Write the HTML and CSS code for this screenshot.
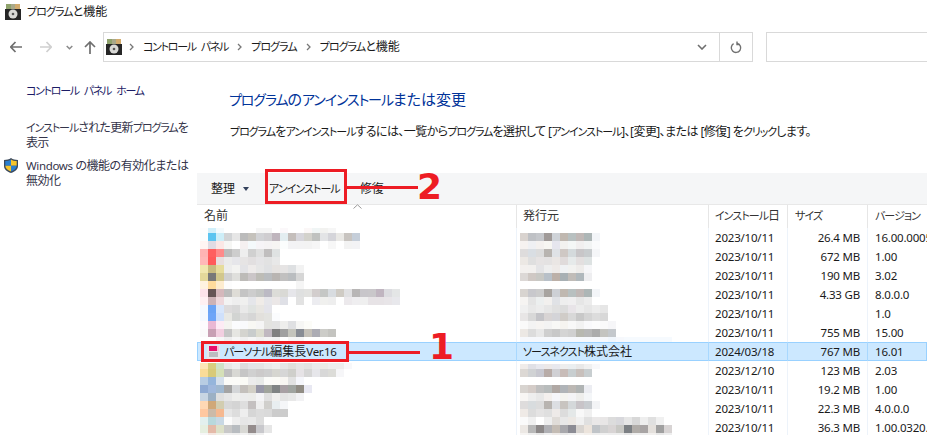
FILE: index.html
```html
<!DOCTYPE html>
<html lang="ja">
<head>
<meta charset="utf-8">
<title>プログラムと機能</title>
<link rel="stylesheet" href="styles.css">
</head>
<body>
<svg class="defs" width="0" height="0" aria-hidden="true">
  <symbol id="cp" viewBox="0 0 16 16">
    <rect x="0" y="5" width="16" height="11" fill="#262626"/>
    <path d="M1 0h14v5H1z" fill="#a9a98a"/>
    <path d="M1 0h5v5H1z" fill="#8fa26c"/>
    <path d="M10 0h5v5h-5z" fill="#d2ab6e"/>
    <circle cx="8" cy="10" r="4.500" fill="#d9d9d6"/>
    <circle cx="8" cy="10" r="1.300" fill="#555"/>
  </symbol>
</svg>
<header class="titlebar">
  <svg class="icon16"><use href="#cp"/></svg>
  <span><span class="ka">プログラム</span>と機能</span>
</header>
<nav class="navbar">
  <svg class="nav-icon" width="12" height="12" viewBox="0 0 12 12"><path d="M5.500 1 .8 6 5.500 11M1 6H12" fill="none" stroke="#6f6f6f" stroke-width="1.700"/></svg>
  <svg class="nav-icon fwd" width="12" height="12" viewBox="0 0 12 12"><path d="M6.500 1 11.200 6 6.500 11M11 6H0" fill="none" stroke="#d0d0d0" stroke-width="1.700"/></svg>
  <svg class="nav-icon down" width="7" height="5" viewBox="0 0 7 5"><path d="M.7 1 3.500 3.800 6.300 1" fill="none" stroke="#8a8a8a" stroke-width="1.500"/></svg>
  <svg class="nav-icon up" width="12" height="13" viewBox="0 0 12 13"><path d="M1 6 6 1 11 6M6 1.500V13" fill="none" stroke="#6f6f6f" stroke-width="1.700"/></svg>
  <div class="address">
    <svg class="icon16 addr-icon"><use href="#cp"/></svg>
    <svg class="crumb-sep first" width="5" height="8" viewBox="0 0 5 8"><path d="M1 1 4 4 1 7" fill="none" stroke="#777" stroke-width="1.300"/></svg>
    <span class="ka sp">コントロール パネル</span>
    <svg class="crumb-sep" width="5" height="8" viewBox="0 0 5 8"><path d="M1 1 4 4 1 7" fill="none" stroke="#777" stroke-width="1.300"/></svg>
    <span class="ka">プログラム</span>
    <svg class="crumb-sep" width="5" height="8" viewBox="0 0 5 8"><path d="M1 1 4 4 1 7" fill="none" stroke="#777" stroke-width="1.300"/></svg>
    <span><span class="ka">プログラム</span>と機能</span>
    <div class="addr-end">
      <svg width="10" height="6" viewBox="0 0 10 6"><path d="M1 1 5 5 9 1" fill="none" stroke="#6f6f6f" stroke-width="1.600"/></svg>
    </div>
    <div class="refresh">
      <svg width="12" height="13" viewBox="0 0 12 13"><path d="M7.500 2.300A4.700 4.700 0 1 1 3.600 2.700M7 .5V3.500H10" fill="none" stroke="#707070" stroke-width="1.400"/></svg>
    </div>
  </div>
  <div class="search"></div>
</nav>
<div class="content">
  <aside class="sidebar">
    <a class="home"><span class="ka sp">コントロール パネル ホーム</span></a>
    <a class="updates"><span class="ka">インストール</span>された更新<span class="ka">プログラム</span>を<br>表示</a>
    <a class="features">
      <svg class="shield" width="14" height="15" viewBox="0 0 14 15">
        <path d="M7 0C5 1.400 2.800 1.900 0 2V8c0 3.300 2.800 5.500 7 7 4.200-1.500 7-3.700 7-7V2C11.200 1.900 9 1.400 7 0z" fill="#3c4a5c"/>
        <path d="M7 1.400C5.500 2.400 3.500 3 1.300 3.100V7.700H7z" fill="#2a7fd0"/>
        <path d="M7 1.400c1.500 1 3.500 1.600 5.700 1.700V7.700H7z" fill="#f7c52b"/>
        <path d="M1.300 7.700H7V13.500C3.800 12.300 1.500 10.500 1.300 7.700z" fill="#f7c52b"/>
        <path d="M12.700 7.700H7V13.500c3.200-1.200 5.500-3 5.700-5.800z" fill="#2a7fd0"/>
      </svg>
      <span><span class="lat">Windows</span> の機能の有効化または<br>無効化</span>
    </a>
  </aside>
  <main class="main">
    <h1 class="heading"><span class="ka">プログラム</span>の<span class="ka">アンインストール</span>または変更</h1>
    <p class="desc"><span class="ka">プログラム</span>を<span class="ka">アンインストール</span>するには、一覧から<span class="ka">プログラム</span>を選択して [<span class="ka">アンインストール</span>]、[変更]、または [修復] を<span class="ka">クリック</span>します。</p>
    <div class="toolbar">
      <span class="tool organize">整理<i class="tri"></i></span>
      <span class="tool uninstall ka">アンインストール</span>
      <span class="tool repair">修復</span>
      <b class="callout-box box-two"></b>
      <b class="callout-line line-two"></b>
      <b class="callout-num num-two">2</b>
    </div>
    <section class="list">
      <div class="row head">
        <div class="c-name">名前<svg class="sort" width="9" height="5" viewBox="0 0 9 5"><path d="M.5 4.500 4.500 .8 8.500 4.500" fill="none" stroke="#9a9a9a"/></svg></div>
        <div class="c-pub">発行元</div>
        <div class="c-date"><span class="ka">インストール</span>日</div>
        <div class="c-size left"><span class="ka">サイズ</span></div>
        <div class="c-ver"><span class="ka">バージョン</span></div>
      </div>
      <div class="row"><div class="c-name"></div><div class="c-pub"></div><div class="c-date">2023/10/11</div><div class="c-size">26.4 MB</div><div class="c-ver">16.00.0005</div></div>
      <div class="row"><div class="c-name"></div><div class="c-pub"></div><div class="c-date">2023/10/11</div><div class="c-size">672 MB</div><div class="c-ver">1.00</div></div>
      <div class="row"><div class="c-name"></div><div class="c-pub"></div><div class="c-date">2023/10/11</div><div class="c-size">190 MB</div><div class="c-ver">3.02</div></div>
      <div class="row"><div class="c-name"></div><div class="c-pub"></div><div class="c-date">2023/10/11</div><div class="c-size">4.33 GB</div><div class="c-ver">8.0.0.0</div></div>
      <div class="row"><div class="c-name"></div><div class="c-pub"></div><div class="c-date">2023/10/11</div><div class="c-size"></div><div class="c-ver">1.0</div></div>
      <div class="row"><div class="c-name"></div><div class="c-pub"></div><div class="c-date">2023/10/11</div><div class="c-size">755 MB</div><div class="c-ver">15.00</div></div>
      <div class="row selected">
        <div class="c-name">
          <svg class="app-icon" width="13" height="14" viewBox="0 0 13 14"><rect width="13" height="14" fill="#e8e6ea"/><rect x="2" y="1" width="8" height="5" fill="#e8106c"/><rect x="10" y="1" width="2" height="5" fill="#f8c0d8"/><rect x="2" y="7" width="9" height="5" fill="#bcbcc0"/></svg>
          <span><span class="ka">パーソナル</span>編集長<span class="lat">Ver.16</span></span>
        </div>
        <div class="c-pub"><span class="ka">ソースネクスト</span>株式会社</div><div class="c-date">2024/03/18</div><div class="c-size">767 MB</div><div class="c-ver">16.01</div>
      </div>
      <div class="row"><div class="c-name"></div><div class="c-pub"></div><div class="c-date">2023/12/10</div><div class="c-size">123 MB</div><div class="c-ver">2.03</div></div>
      <div class="row"><div class="c-name"></div><div class="c-pub"></div><div class="c-date">2023/10/11</div><div class="c-size">19.2 MB</div><div class="c-ver">1.00</div></div>
      <div class="row"><div class="c-name"></div><div class="c-pub"></div><div class="c-date">2023/10/11</div><div class="c-size">22.3 MB</div><div class="c-ver">4.0.0.0</div></div>
      <div class="row"><div class="c-name"></div><div class="c-pub"></div><div class="c-date">2023/10/11</div><div class="c-size">36.3 MB</div><div class="c-ver">1.00.0320.0</div></div>
      <svg id="mosaic" class="mosaic" viewBox="197 204 730 231" width="730" height="231" aria-hidden="true"></svg>
      <b class="callout-box box-one"></b>
      <b class="callout-line line-one"></b>
      <b class="callout-num num-one">1</b>
    </section>
  </main>
</div>
<script src="mosaic.js"></script>
</body>
</html>
```
FILE: styles.css
```css
* { box-sizing: border-box; }
html, body { margin: 0; height: 100%; overflow: hidden; background: #fff; }
body {
  font: 12px/16px "Noto Sans", "Noto Sans CJK JP", sans-serif;
  font-feature-settings: "palt";
  color: #1a1a1a;
}
.defs { position: absolute; }
.icon16 { width: 16px; height: 16px; flex: none; }
.ka { font-size: 11px; letter-spacing: -.95px; }
.ka.sp { letter-spacing: -1.3px; word-spacing: 3.500px; }
.lat { font-size: 11.500px; letter-spacing: -.35px; }

.titlebar { height: 24px; margin-bottom: 8px; display: flex; align-items: center; gap: 6px; padding-left: 5px; }

.navbar { height: 30px; display: flex; align-items: center; padding-left: 10px; }
.nav-icon { flex: none; }
.fwd { margin-left: 18px; }
.down { margin-left: 14px; }
.up { margin-left: 11px; margin-right: 7px; }
.address {
  width: 650px; height: 30px; display: flex; align-items: center; flex: none;
  border: 1px solid #d9d9d9; padding-left: 2px;
}
.addr-icon { margin-right: 7px; }
.crumb-sep { flex: none; margin: 0 9px; }
.crumb-sep.first { margin: 0 9px 0 0; }
.addr-end { margin-left: auto; width: 34px; display: flex; justify-content: center; }
.refresh { width: 33px; height: 28px; border-left: 1px solid #d9d9d9; display: flex; align-items: center; justify-content: center; }
.search { flex: none; margin-left: 13px; width: 200px; height: 30px; border: 1px solid #d9d9d9; }

.content { display: flex; }
.sidebar { width: 197px; flex: none; padding: 21px 0 0 26px; display: flex; flex-direction: column; }
.sidebar a { display: block; color: #34344a; line-height: 15px; white-space: nowrap; }
.sidebar .home { color: #1c1c66; }
.updates { margin-top: 22px; letter-spacing: -.7px; }
.updates .ka { letter-spacing: -1.1px; }
.features { margin-top: 8px; position: relative; letter-spacing: -.45px; }
.shield { position: absolute; left: -22px; top: 0; }

.main { flex: 1; min-width: 0; }
.heading { margin: 26px 0 0 32px; font-size: 15px; line-height: 22px; font-weight: 400; color: #003399; }
.heading .ka { font-size: 14px; letter-spacing: -1.1px; }
.desc { margin: 13px 0 0 33px; height: 16px; white-space: nowrap; letter-spacing: -.58px; }
.desc .ka { letter-spacing: -1.05px; }

.toolbar { margin-top: 33px; height: 32px; background: #f5f6f7; border-bottom: 1px solid #e8e8e8; display: flex; align-items: center; position: relative; }
.tool { flex: none; }
.organize { margin-left: 14px; display: flex; align-items: center; }
.tri { width: 0; height: 0; margin-left: 8px; border: 3.500px solid transparent; border-top: 4px solid #33415c; border-bottom: 0; }
.uninstall { margin-left: 20px; }
.repair { margin-left: 20px; }

.list { position: relative; }
.row { height: 19px; display: grid; grid-template-columns: 320px 192px 79px 80px 1fr; line-height: 19px; white-space: nowrap; }
.row > div { border-right: 1px solid #edf3fa; padding-left: 6px; overflow: hidden; }
.row > .c-date, .row > .c-size, .row > .c-ver { font-size: 11.500px; letter-spacing: -.2px; }
.row > .c-ver { border-right: 0; overflow: visible; padding-left: 7px; }
.row > .c-size { text-align: right; padding-left: 0; padding-right: 7px; }
.row > .c-size.left { text-align: left; padding-left: 7px; }
.row > .c-name { padding-left: 7px; }
.head { height: 23px; line-height: 22px; color: #333; }
.head > div { border-right-color: #e6e6e6; position: relative; }
.head > .c-name { overflow: visible; }
.head > .c-date { font-size: 12px; letter-spacing: 0; }
.sort { position: absolute; left: 156px; top: -1px; }
.selected { background: #cce8ff; box-shadow: inset 0 0 0 1px #99d1ff; }
.selected > div { border-right-color: #a8d8ff; }
.selected .c-name { display: flex; align-items: center; gap: 4px; padding-left: 10px; }
.app-icon { flex: none; }

.mosaic { position: absolute; left: 0; top: 0; pointer-events: none; }

.callout-box { position: absolute; border: 3px solid #ed1c24; }
.callout-line { position: absolute; height: 3px; background: #ed1c24; }
.callout-num { position: absolute; color: #ed1c24; font: 700 36px/36px "DejaVu Sans", sans-serif; }
.box-two { left: 68px; top: -4px; width: 82px; height: 35px; }
.line-two { left: 150px; top: 13px; width: 71px; }
.num-two { left: 220px; top: -4px; }
.box-one { left: 4px; top: 136px; width: 148px; height: 21px; }
.line-one { left: 152px; top: 146px; width: 71px; }
.num-one { left: 232px; top: 124px; }
```
FILE: mosaic.js
```js
// Pixelated (redacted) cells: [x, y, height, row colours]; cells are 8 px wide on the page grid.
var N = [
[200,227,5,"fdfdfd d0effa f3fafd fff fff fff fff f5f5f5 f5f5f5 fff fbf8fa fff fff fbf7f7 f0f5f5 f2f2f0 f6f6f6"],
[200,232,8,"fbfdfd 5bc4f0 cdeef8 d2d4d6 e6e6e6 bbbbbb c5c2bc d2d3d6 cfcdd0 bfb5bd e3edf0 c4bebb d7d6dc d3d2cc c0c2c0 e3e4e6 d5d5da e9e8e5 c8c4c0 c5ced9"],
[200,240,8,"fff5f3 e0dbe3 fbe7e5 f6f6f4 fff f5f0f0 f4f9fb f6f4f7 f5f3f4 f6f5f3 fbfdfd f3f3f5 f3f3f4 f3f3f3 f6f6f6 fff f7f7f7 fff f3f3f3 f3f3f5"],
[200,248,8,"ffb4b4 ff5f5f ff8a8a bcbcbc cdcdcd eee d0d0d0 dfdfdf c0bebe dfe2e2"],
[200,256,8,"ffb8b8 ff5a5a e8dede ebebeb e6e6ea e6e4e4 e2dfe0 e5e4e6 e2e2e2 e8e8e8"],
[200,264,8,"f0e7b0 c8bb80 e6dc9c ededed f3f3f1 e3e3e6 eeebea e6e6e6 e0e1e3 e6e3e1 e6e4e4 dee0e2 f2f2f2"],
[200,272,8,"e3d89a 787878 d2c78c d0d0d0 dfdfdc bdbbb8 cbc6c8 bdbcb6 b9bcbf b9b5b2 c1c0c0 babdc0 d6d6d6"],
[200,280,8,"fff3e0 ffdb9c fdeccf fcfcfc fff fff fff fff fff fff fff fff f5f5f5"],
[200,288,8,"fde3ea 655555 d5b8bc bcbcbc dedcd6 c4c4c4 cdcdcd c5c7c5 bcbac4 dcdcd8 d9d9d5 e6e6ea dfe0e0 e2e2e0 d2cdcd c5c7c5 d8dce0 cfcbc4 e0e0e2 b8b6b6 c8c6ca c9c7ca c0b5c0 dcdce0 e4e6e6"],
[200,296,8,"fff0f2 ccb2b6 eed8dc f3f3f3 eee f0f0ef e5e6ea f0ece8 e6e6ea ebe7e7 dfe0e6 fff e2e2e2 fff ececf0 f0f0ee eee fff ece9ec efeef0 efefef e7e3e6 e7e3e6 e8e5e8 e8e8ec"],
[200,304,8,"f5f9ff 6aa3f5 d8e6fb dddbdc d8d8d8 e9e9e9 e0e3e1 e8e6e2 e4e4ea"],
[200,312,8,"f5f9ff 6ea5f8 cfe0fb e8e8e4 d2d4d2 dcdcdc d6d6d6 e2e0dc e3e3e0 fbfcfe"],
[200,320,8,"fdfafd eab8d4 fdebf4 f4f4f0 fbfcfe f9fafc f8f8f4 f5f5f5 e3e3e0 e3e3e3 eeeeec dfe0e2 f6f6f4 fcfcf8"],
[200,328,8,"fbfafb c8a0b4 f2cfe0 c6c6c6 e6e6e2 d4d4cf c8cccc dcdcd0 c0b8c0 808080 a0a0a0 c4c4bc 888c94 c4c0b8 acacb4 ccccc8 c4c4c0"],
[200,336,4,"fff fff f6f6f6 eee f6f6f6 f0f0f0 f6f6f6 f0f0f0 f4f4f4 f2f2f2 fff f6f6f6 f6f6f6"],
[200,362,6,"fde7b8 d8cf80 cfe3c8 e8e8e6 eee dedcdc e3e3e6 e4e4e4 eaeaea eee e6e6e6 e0e0dc e6e6e6 e3e3e3 eaeaec ecebe6 eee eee f8f8fa"],
[200,368,8,"fbdc98 d8ca78 d5e0b8 bfbfbf d8d8d4 c6c6c6 d0d0d0 cccaca cecece d6d6d0 d6d6d6 cfcfcb e6e3e6 d6d6d6 e6e6ea d8d8d8 dcdcd8 f6f6f8"],
[200,376,8,"b8cde3 95b5db d5e0ec fbfbf8 fbfbf8 fbfbf6 ececec e8eae8 fbfbf8 fbfbf6 f8f6f2 e2e2e2 f5f6fb"],
[200,384,8,"8faad3 a0b8dc a0b8d0 a4a4a4 d4d6d8 c4c0bc d2cfc6 9898a8 a0a49c 808484 a8a0a4 a0a4a0 908c84 e8e8f2"],
[200,392,8,"c8d5e3 9cb0c4 dfdfdf e6e6e6 eeeeec ececec ececea f4f4f6 e0e0e0 f0f0ee e4e4e4 e8e8e8 f2f2f4"],
[200,400,8,"ffd8b4 d0a878 d2cdb0 d8d8d8 d4d4d4 dedede c4c0c0 eee d0cfcc e8eef0 f5f6f8"],
[200,408,8,"ffc8a0 ccbaa8 f5b890 e6e6e6 ddd eee d6d6d6 dcdcdc dadada ccc ccc"],
[200,416,8,"e3f0ee b8d8dc c8d8e4 fbfbfb eee e6e6e6 e8e8e8 ddd"],
[200,424,8,"e6efe0 e4baa8 dce0c8 c8c8c8 b8bcc0 d8d8d4 948c8c c8c8cc e6e6e6"],
[200,432,3,"f6f6f6 f4e6e0 f0f0e6 f0f0f0 eee f2f2f2 e6e6e6 f0f0f0"],
[520,232,8,"d9d3cf bfc1c5 c5c7cb a09a98 cfd3d8 c0b8b0 b8c0c0 c0b8b6 adb6b6 f3f5f8"],
[520,240,8,"f6f2f0 eff0f3 f4f1ef f7f6f2 e6e6ee f3f2ef f4f7f6 f1efef f2f4f4 fafbfc"],
[520,248,8,"dedcdc d9dee3 dcdcdc b8b4b0 dfe2e6 cfc8c4 d4dadc c8c6c8 c8ccce f5f6f8"],
[520,256,8,"ece8e4 dfdfdf e6e3e3 e4e2e2 eae6e4 e0dbdb e6eaea e3dfdf dde2e2"],
[520,264,8,"f3f0ee f2f0ee e4e4e6 eee eeeae8 f0f2f4 f2f2f0 eeecea f6f6f8"],
[520,272,8,"dcd8d6 cfc8c4 c8c8c4 b8c0c8 bcb0a8 a8b0b4 c0bcb8 b0b8bc eeeef0"],
[520,288,8,"d8d4d0 c8c8cc ccc a8a4a0 cdd0d5 c0b8b0 b8c0c0 c0b8b6 adb6b6 f3f5f8"],
[520,296,8,"f6f4f2 e4e4e4 ecefef f2f0ee e0e2e6 eee f0eff0 e6e6e6 ececec"],
[520,304,8,"f0f0f0 e8e8e8 ececec e6e6e6 e0e0e0 dcdcdc e8e4e8 ececec e6e6e6 ececec e6e6e6"],
[520,312,8,"e8e6e6 d8d8d8 c4c4c8 d8d4d4 d4d4d8 d0ccc8 d8d8d8 c8c8c8 d4d4d4 dcdcdc d8d8d8"],
[520,320,8,"fafafa f3f3f3 f6f4f2 f3f3f3 f8f8f6 f6f4f0 f8f8f8 f2f2f2 f9f9fb fcfcfc fafafa f6f6f8"],
[520,328,8,"ece8e4 dcdcdc e8e8e8 cfcfcf c8c8c8 d4d4d4 d0d0d0 b8b8b0 b8b8b8 acacac c4c4c0 c4c8cc"],
[520,336,5,"f6f8fc f6f8fc f6f8fc f6f8fc f6f8fc f6f8fc f6f8fc f6f8fc f6f8fc f6f8fc f6f8fc f0f6fc f6f8fc f6fafe f6fafe f6fafe f6fafe f6fafe f6fafe"],
[520,363,5,"f0ecea e0e0e6 e8e8ee ece8e8 e8e8ee eee eaeef0 e8e8e8 f0f0f0 f8f8fa"],
[520,368,8,"dcd8d4 d0d2d4 c8c8d0 b8aca8 d0d0d4 c8bcb8 c8ced0 c8c0bc c8ced0"],
[520,384,8,"d8d4d0 d4ccc8 c0c0c0 b8bcbc b0a8a4 b0b4b8 bcb8b4 b0b4b4 ecedf2"],
[520,392,8,"f8f6f4 eee e8e8e8 f4f0ee f6f6fa f4f4f0 f4f4f6 eeeeec f4f6f8"],
[520,400,8,"dedcdc d8dcde dcdcdc b8b4b0 dcdee2 c8c4c0 d4d8da c8c4c8 c8ccd0 f3f4f6"],
[520,408,8,"efeae6 dcdcdc e4e3e3 dfdfdf eeeae8 dcdcdc e4e8e8 f8f8f8 f0f0f0"],
[520,416,8,"fafafa f0f0f0 fff eee e0dcd8 e8e8e8 ece8e4 f0f0f0 e0e0e0 eae8e8 e8e6e6 dcdcdc d8d8dc e6e6e6 d8d8d8 eee e0e0e0 f0f0f0"],
[520,424,8,"ece8e4 b8b8b8 8c8888 b0b0b4 c4bcb4 a8a8ac 8c8c94 d8d4d0 ece4dc c0c4c8 d0d0d0 d8d4d4 c8c8c4 7c8084 b0aca8 a8a4a4 e4e0dc a0a0a0 d8d4d4"],
[520,432,3,"f6f4f2 eee e8e8e8 f0f0f0 eeeae8 e8e8e8 eee f6f4f2 f4f0ec eee f0f0f0 eee eee e6e6e6 eee eee f2f0ee e8e8e8 eee"]
];
var svg = document.getElementById("mosaic");
N.forEach(function (row) {
  row[3].split(" ").forEach(function (c, i) {
    var r = document.createElementNS("http://www.w3.org/2000/svg", "rect");
    r.setAttribute("x", row[0] + i * 8);
    r.setAttribute("y", row[1]);
    r.setAttribute("width", 8);
    r.setAttribute("height", row[2]);
    r.setAttribute("fill", "#" + c);
    svg.appendChild(r);
  });
});
```
